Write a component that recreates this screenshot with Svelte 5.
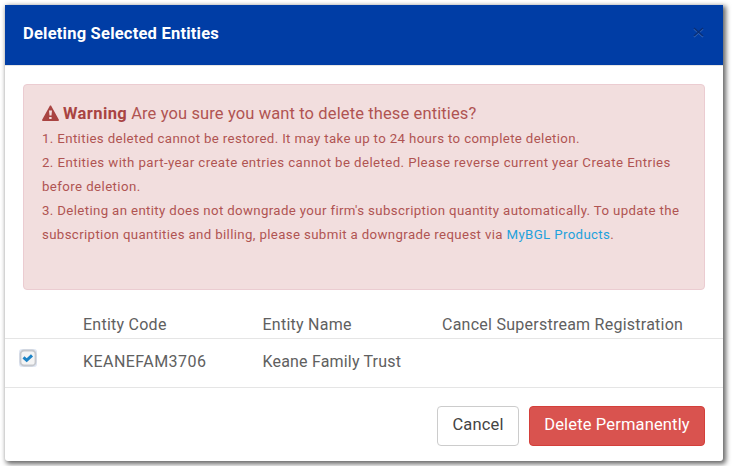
<script lang="ts">
  let open = true;
  let entities = [
    { code: "KEANEFAM3706", name: "Keane Family Trust", selected: true },
  ];
  function close() {
    open = false;
  }
  function toggle(i: number) {
    entities[i].selected = !entities[i].selected;
  }
</script>

<style>
  :global(body) {
    background: #fff;
    overflow: hidden;
  }
  .modal {
    box-sizing: border-box;
    width: 718px;
    height: 456px;
    margin: 5px;
    display: flex;
    flex-direction: column;
    background: #fff;
    border-radius: 0 0 3px 3px;
    box-shadow: 2px 2px 5px 1px rgba(0, 0, 0, 0.6);
    color: #606060;
    font-family: Roboto, "Liberation Sans", sans-serif;
    font-size: 16px;
  }
  .modal-header {
    display: flex;
    align-items: center;
    justify-content: space-between;
    box-sizing: border-box;
    height: 61px;
    padding: 0 18px 2px;
    background: #003da5;
    border-bottom: 1px solid #e5e5e5;
  }
  h4 {
    margin: 0;
    color: #fff;
    font-size: 16.5px;
    font-weight: 700;
    line-height: 24px;
    letter-spacing: 0.22px;
  }
  .close {
    display: flex;
    padding: 0 0 4px;
    border: 0;
    background: none;
    cursor: pointer;
  }
  .alert {
    box-sizing: border-box;
    height: 206px;
    margin: 18px 18px 0;
    padding: 16px 18px 0;
    border: 1px solid #ebccd1;
    border-radius: 4px;
    background: #f2dede;
    color: #b05452;
    font-size: 13.25px;
    line-height: 24px;
    white-space: nowrap;
  }
  .alert-title {
    display: flex;
    align-items: center;
    height: 26px;
    padding-bottom: 0;
    font-size: 16.5px;
    line-height: 24px;
  }
  .alert-title svg {
    margin: 0 4px 3px 0;
  }
  .alert-title strong {
    margin-right: 4px;
    color: #a94442;
    letter-spacing: 0.4px;
  }
  .question {
    letter-spacing: 0.12px;
  }
  .alert p {
    margin: 0;
  }
  .restore {
    letter-spacing: 0.365px;
  }
  .part-year {
    letter-spacing: 0.415px;
  }
  .downgrade {
    letter-spacing: 0.36px;
  }
  .alert a {
    color: #1fa2dc;
    text-decoration: none;
  }
  .row {
    display: grid;
    grid-template-columns: 60px 179.5px 179.5px 1fr;
    box-sizing: border-box;
    padding-left: 18px;
    border-bottom: 1px solid #e5e5e5;
    line-height: 24px;
    letter-spacing: 0.25px;
  }
  .row-head {
    height: 49px;
    padding-top: 23px;
  }
  .row-item {
    height: 49px;
    padding-top: 11px;
  }
  .code {
    letter-spacing: 0.45px;
  }
  .name {
    letter-spacing: 0.18px;
  }
  .checkbox {
    display: flex;
    width: 18px;
    height: 18px;
    margin: -1px 0 0 -4px;
    padding: 0;
    border: 0;
    background: none;
    cursor: pointer;
  }
  .modal-footer {
    display: flex;
    justify-content: flex-end;
    gap: 10px;
    padding: 18px 18px 0;
  }
  .btn {
    box-sizing: border-box;
    height: 40px;
    padding: 0 0 3px;
    border: 1px solid #ccc;
    border-radius: 4px;
    background: #fff;
    color: #444;
    font-family: inherit;
    font-size: 16.5px;
    letter-spacing: 0.15px;
    cursor: pointer;
  }
  .btn-cancel {
    width: 82px;
  }
  .btn-danger {
    width: 176px;
    border-color: #d43f3a;
    background: #d9534f;
    color: #fff;
  }
</style>

{#if open}
  <div class="modal" role="dialog">
    <div class="modal-header">
      <h4>Deleting Selected Entities</h4>
      <button class="close" aria-label="Close" on:click={close}>
        <svg width="13" height="12" viewBox="0 0 13 12">
          <path d="M2 3l9 8M11 3l-9 8" stroke="#3568b9" stroke-width="1.5" />
          <path d="M2 2l9 8M11 2l-9 8" stroke="#092f78" stroke-width="1.5" />
        </svg>
      </button>
    </div>
    <div class="alert">
      <div class="alert-title">
        <svg width="17" height="16" viewBox="0 0 17 16">
          <path fill="#a94442" fill-rule="evenodd" d="M8 .5h1L17 15q0 1-1 1H1q-1 0-1-1zM7 5.5l.5 5h2l.5-5zM7.2 12v2h2.4v-2z" />
        </svg>
        <strong>Warning</strong>
        <span class="question">Are you sure you want to delete these entities?</span>
      </div>
      <p class="restore">1. Entities deleted cannot be restored. It may take up to 24 hours to complete deletion.</p>
      <p class="part-year">2. Entities with part-year create entries cannot be deleted. Please reverse current year Create Entries<br />before deletion.</p>
      <p class="downgrade">3. Deleting an entity does not downgrade your firm's subscription quantity automatically. To update the<br />subscription quantities and billing, please submit a downgrade request via <a href="#products">MyBGL Products</a>.</p>
    </div>
    <div class="row row-head">
      <span></span>
      <span>Entity Code</span>
      <span>Entity Name</span>
      <span>Cancel Superstream Registration</span>
    </div>
    {#each entities as entity, i}
      <div class="row row-item">
        <button class="checkbox" role="checkbox" aria-checked={entity.selected} aria-label={entity.name} on:click={() => toggle(i)}>
          <svg width="18" height="18" viewBox="0 0 18 18">
            <rect width="18" height="18" rx="3" fill="#dfe6f3" />
            <rect x="1.5" y="1.5" width="15" height="15" rx="3.5" fill="#f4f4f4" stroke="#c5c8cd" stroke-width="1.8" />
            {#if entity.selected}
              <path d="M4.5 8.3l3.2 3L13 6.3" fill="none" stroke="#1c83c6" stroke-width="3" />
            {/if}
          </svg>
        </button>
        <span class="code">{entity.code}</span>
        <span class="name">{entity.name}</span>
      </div>
    {/each}
    <div class="modal-footer">
      <button class="btn btn-cancel" on:click={close}>Cancel</button>
      <button class="btn btn-danger" on:click={close}>Delete Permanently</button>
    </div>
  </div>
{/if}
